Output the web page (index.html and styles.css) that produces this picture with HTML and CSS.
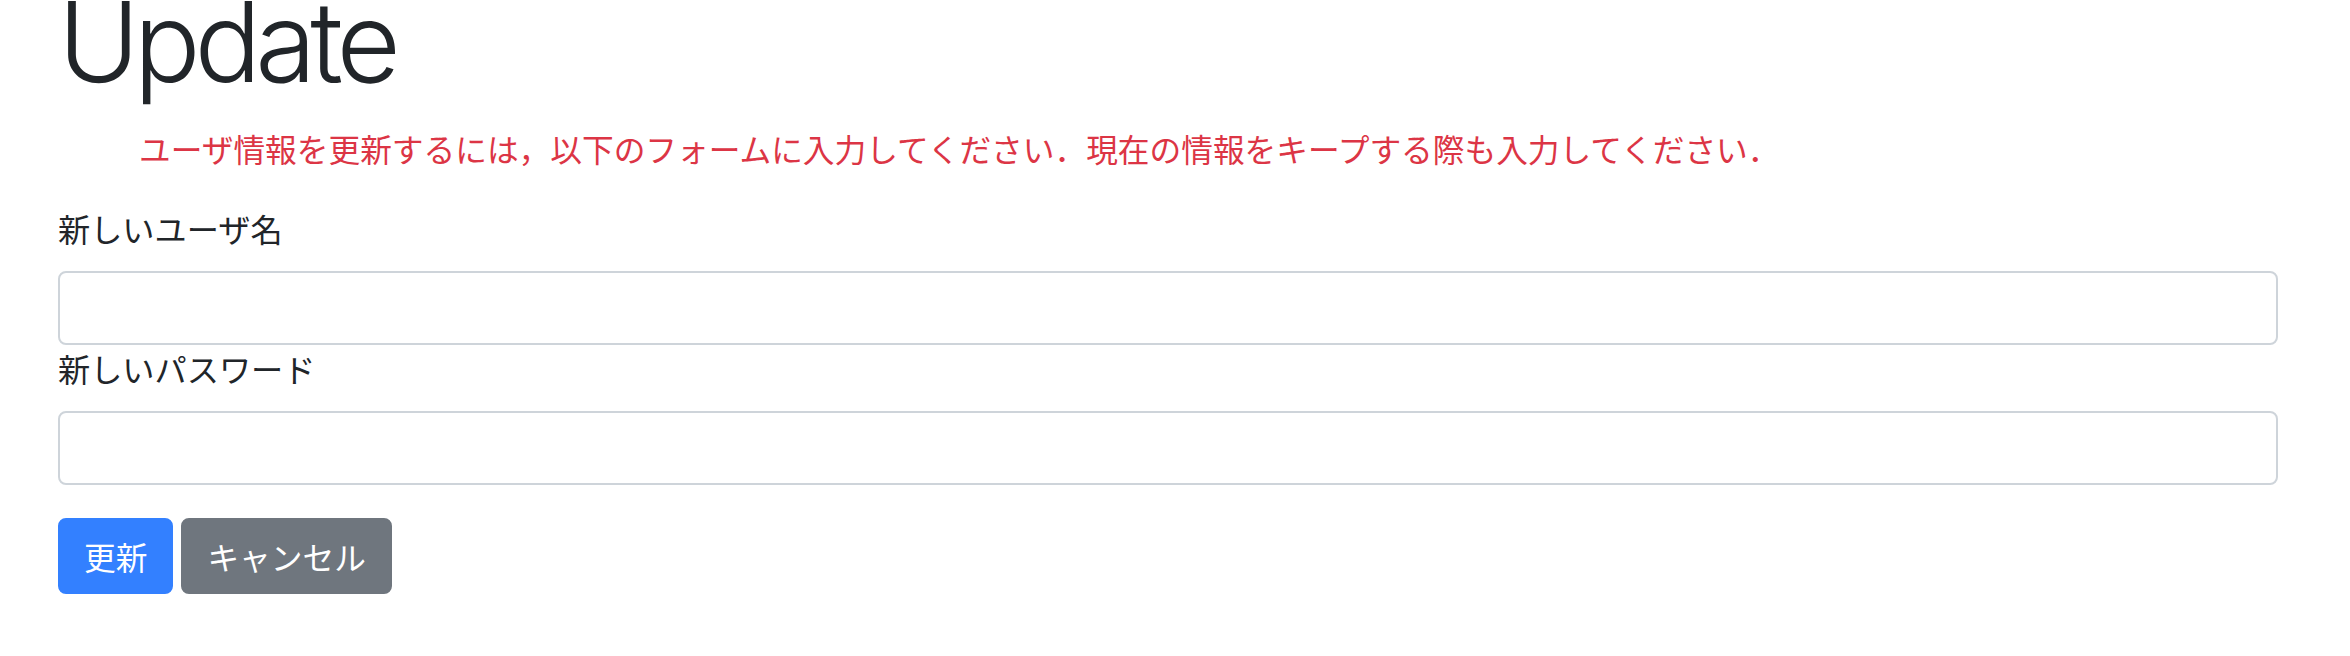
FILE: index.html
```html
<!DOCTYPE html>
<html lang="ja">
<head>
<meta charset="utf-8">
<title>Update</title>
<link rel="stylesheet" href="styles.css">
</head>
<body>
<div class="page">
  <h1 class="title">Update</h1>
  <ul class="flash">
    <li class="flash-item">ユーザ情報を更新するには，以下のフォームに入力してください．現在の情報をキープする際も入力してください．</li>
  </ul>
  <form class="form">
    <div class="field">
      <label class="label" for="name">新しいユーザ名</label>
      <input class="input" id="name" type="text">
    </div>
    <div class="field">
      <label class="label" for="pass">新しいパスワード</label>
      <input class="input" id="pass" type="password">
    </div>
    <div class="actions">
      <button class="btn btn-primary" type="button">更新</button>
      <button class="btn btn-secondary" type="button">キャンセル</button>
    </div>
  </form>
</div>
</body>
</html>
```
FILE: styles.css
```css
html, body {
  margin: 0;
  padding: 0;
  background: #ffffff;
}

body {
  font-family: "Noto Sans CJK JP", "Noto Sans", sans-serif;
  color: #212529;
  overflow: hidden;
}

.page {
  width: 2220px;
  padding-left: 58px;
}

.title {
  font-family: Inter, "Liberation Sans", sans-serif;
  font-weight: 300;
  font-size: 111px;
  line-height: 84px;
  letter-spacing: -6px;
  margin: 0;
  color: #212529;
}

.flash {
  list-style: none;
  margin: 41px 0 0 0;
  padding: 0 0 0 81px;
}

.flash-item {
  font-size: 31.7px;
  line-height: 47px;
  color: #dc3545;
}

.form {
  margin-top: 33px;
  display: flex;
  flex-direction: column;
}

.field {
  display: flex;
  flex-direction: column;
}

.label {
  font-size: 32.2px;
  line-height: 47px;
  margin-bottom: 19px;
  color: #212529;
}

.input {
  box-sizing: border-box;
  width: 2220px;
  height: 74px;
  margin: 0;
  border: 2px solid #ced4da;
  border-radius: 8px;
  background: #ffffff;
  padding: 0 24px;
  font-size: 31.7px;
  outline: none;
}

.actions {
  display: flex;
  gap: 8px;
  margin-top: 33px;
}

.btn {
  box-sizing: border-box;
  height: 76px;
  padding: 0 24px;
  border: 2px solid transparent;
  border-radius: 8px;
  font-family: "Noto Sans CJK JP", "Noto Sans", sans-serif;
  font-size: 31.7px;
  line-height: 47px;
  color: #ffffff;
  display: flex;
  align-items: center;
  justify-content: center;
}

.btn-primary {
  background: #3380ff;
  border-color: #3380ff;
}

.btn-secondary {
  background: #6f767e;
  border-color: #6f767e;
}
```
